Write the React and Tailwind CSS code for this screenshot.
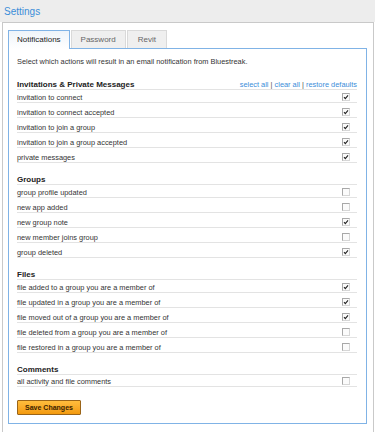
import React from "react";

const sections = [
  {
    title: "Invitations & Private Messages",
    links: true,
    rows: [
      ["invitation to connect", true],
      ["invitation to connect accepted", true],
      ["invitation to join a group", true],
      ["invitation to join a group accepted", true],
      ["private messages", true],
    ],
  },
  {
    title: "Groups",
    rows: [
      ["group profile updated", false],
      ["new app added", false],
      ["new group note", true],
      ["new member joins group", false],
      ["group deleted", true],
    ],
  },
  {
    title: "Files",
    rows: [
      ["file added to a group you are a member of", true],
      ["file updated in a group you are a member of", true],
      ["file moved out of a group you are a member of", true],
      ["file deleted from a group you are a member of", false],
      ["file restored in a group you are a member of", false],
    ],
  },
  {
    title: "Comments",
    short: true,
    rows: [["all activity and file comments", false]],
  },
];

function Box({ checked }) {
  return (
    <span className="flex h-[8px] w-[8px] items-center justify-center border border-[#a8a8a8] border-r-[#d6d6d6] border-b-[#d6d6d6] bg-[#fbfbfb]">
      {checked && (
        <svg width="6" height="6" viewBox="0 0 6 6">
          <path d="M1 3.2 L2.3 4.6 L5 1.4" fill="none" stroke="#222" strokeWidth="1.1" />
        </svg>
      )}
    </span>
  );
}

export default function App() {
  return (
    <div className="h-[432px] w-[375px] overflow-hidden bg-white font-['Liberation_Sans',Arial,sans-serif]">
      <div className="h-[22px] bg-[#ededed] pl-[4px] text-[10px] leading-[24px] text-[#3b8dd9]">
        Settings
      </div>

      <div className="ml-[2px] h-[420px] w-[372px] border-x border-t border-[#c9c9c9] pl-[5px] pr-[6px] pt-[7px]">
        {/* tabs */}
        <div className="flex h-[18px] items-start text-[8px]">
          <div className="relative z-10 -mb-px h-[19px] border border-b-0 border-[#80b3e6] bg-gradient-to-b from-[#eef4fa] to-white px-[8px] leading-[18px] text-[#222]">
            Notifications
          </div>
          <div className="ml-px h-[18px] border border-b-0 border-[#d9d9d9] bg-[#efefef] px-[9px] leading-[18px] text-[#666]">
            Password
          </div>
          <div className="ml-px h-[18px] border border-b-0 border-[#d9d9d9] bg-[#efefef] px-[10px] leading-[18px] text-[#666]">
            Revit
          </div>
        </div>

        {/* panel */}
        <div className="border border-[#80b3e6] bg-white pb-[8px] pl-[8px] pr-[9px] pt-[8px] text-[7.4px] text-[#333]">
          <p className="leading-[9px]">
            Select which actions will result in an email notification from Bluestreak.
          </p>

          {sections.map((s, i) => (
            <div key={s.title}>
              <div
                className={
                  "flex items-end justify-between border-b border-[#e3e3e3] leading-[9px] " +
                  (i === 0 ? "pt-[14px]" : "pt-[12px]")
                }
              >
                <span className="text-[8px] font-bold text-[#222]">{s.title}</span>
                {s.links && (
                  <span className="text-[7.4px] text-[#3b8dd9]">
                    select all <span className="text-[#555]">|</span> clear all{" "}
                    <span className="text-[#555]">|</span> restore defaults
                  </span>
                )}
              </div>
              {s.rows.map(([label, checked], j) => (
                <div
                  key={label}
                  className={
                    "flex items-end justify-between border-b border-[#e3e3e3] leading-[9px] " +
                    (j === 0 ? (s.short ? "h-[12px]" : "h-[13px]") : "h-[15px]")
                  }
                >
                  <span>{label}</span>
                  <span className="mb-[1px] mr-[7px]">
                    <Box checked={checked} />
                  </span>
                </div>
              ))}
            </div>
          ))}

          <button className="mt-[13px] h-[15px] w-[64px] rounded-[1px] border border-[#9a6418] bg-gradient-to-b from-[#ffbd3c] to-[#f39a0b] text-[7px] font-bold leading-[13px] text-[#3a2300]">
            Save Changes
          </button>
        </div>
      </div>
    </div>
  );
}
